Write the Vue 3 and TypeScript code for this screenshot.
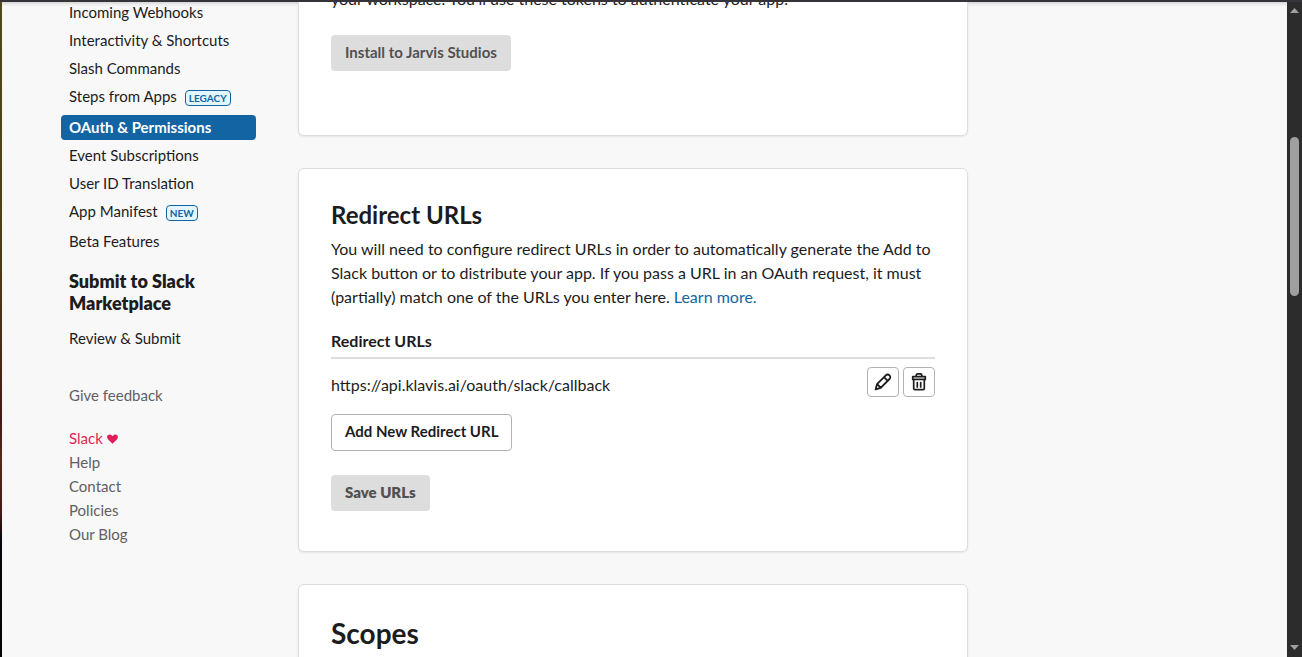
<script setup lang="ts">
interface NavItem {
  label: string
  badge?: string
  active?: boolean
}

const navItems: NavItem[] = [
  { label: 'Incoming Webhooks' },
  { label: 'Interactivity & Shortcuts' },
  { label: 'Slash Commands' },
  { label: 'Steps from Apps', badge: 'LEGACY' },
  { label: 'OAuth & Permissions', active: true },
  { label: 'Event Subscriptions' },
  { label: 'User ID Translation' },
  { label: 'App Manifest', badge: 'NEW' },
  { label: 'Beta Features' },
]

const footerLinks: string[] = ['Help', 'Contact', 'Policies', 'Our Blog']
const redirectUrls: string[] = ['https://api.klavis.ai/oauth/slack/callback']
</script>

<template>
  <div class="window">
    <div class="edge"></div>
    <div class="viewport">
      <div class="page">
        <aside class="sidebar">
          <nav aria-label="App settings">
            <ul class="nav">
              <li v-for="item in navItems" :key="item.label">
                <a href="#" class="nav-link" :class="{ active: item.active, tall: item.badge }">
                  {{ item.label }}<span v-if="item.badge" class="badge">{{ item.badge }}</span>
                </a>
              </li>
            </ul>
            <h3 class="nav-heading">Submit to Slack Marketplace</h3>
            <ul class="nav">
              <li><a href="#" class="nav-link">Review &amp; Submit</a></li>
            </ul>
          </nav>
          <div class="side-footer">
            <a href="#" class="feedback">Give feedback</a>
            <a href="#" class="slack">
              Slack
              <svg width="11" height="10" viewBox="0 0 12 11" aria-hidden="true">
                <path d="M6 10.6 1.2 6.1C-.2 4.7-.3 2.6.8 1.4c1.2-1.3 3.4-1.2 4.5.2L6 2.5l.7-.9c1.1-1.4 3.3-1.5 4.5-.2 1.1 1.2 1 3.3-.4 4.7z" fill="currentColor" />
              </svg>
            </a>
            <a v-for="link in footerLinks" :key="link" href="#">{{ link }}</a>
          </div>
        </aside>

        <main class="content">
          <section class="card tokens">
            <p class="text">your workspace. You’ll use these tokens to authenticate your app.</p>
            <button type="button" class="btn disabled" disabled>Install to Jarvis Studios</button>
          </section>

          <section class="card">
            <h2 class="title">Redirect URLs</h2>
            <p class="text">
              You will need to configure redirect URLs in order to automatically generate the Add to
              Slack button or to distribute your app. If you pass a URL in an OAuth request, it must
              (partially) match one of the URLs you enter here. <a href="#" class="more">Learn more.</a>
            </p>
            <table class="urls">
              <thead>
                <tr><th colspan="2" scope="col">Redirect URLs</th></tr>
              </thead>
              <tbody>
                <tr v-for="url in redirectUrls" :key="url">
                  <td class="url">{{ url }}</td>
                  <td class="actions">
                    <div class="action-row">
                      <button type="button" class="icon-btn" aria-label="Edit">
                        <svg width="20" height="20" viewBox="0 0 20 20" fill="none" stroke="currentColor" stroke-width="1.8" stroke-linejoin="round" stroke-linecap="round" aria-hidden="true">
                          <path d="M2.6 17.4 4 12.2 12.8 3.3a2.5 2.5 0 0 1 3.7 0 2.6 2.6 0 0 1 0 3.7L7.7 15.9zM4.2 12.2l3.5 3.5M11 5.2l3.7 3.7" />
                        </svg>
                      </button>
                      <button type="button" class="icon-btn" aria-label="Delete">
                        <svg width="20" height="20" viewBox="0 0 20 20" fill="none" stroke="currentColor" stroke-width="1.7" stroke-linejoin="round" stroke-linecap="round" aria-hidden="true">
                          <path d="M7.2 4.5V3.2c0-.8.5-1.3 1.3-1.3h3c.8 0 1.3.5 1.3 1.3v1.3M3.7 4.7h12.6v2.7H3.7zM4.7 7.5v9c0 .7.5 1.2 1.2 1.2h8.2c.7 0 1.2-.5 1.2-1.2v-9M8.3 10.5v4.5M11.7 10.5v4.5" />
                        </svg>
                      </button>
                    </div>
                  </td>
                </tr>
              </tbody>
            </table>
            <div class="stack">
              <button type="button" class="btn outline">Add New Redirect URL</button>
              <button type="button" class="btn disabled heavy" disabled>Save URLs</button>
            </div>
          </section>

          <section class="card">
            <h1 class="scopes">Scopes</h1>
          </section>
        </main>
      </div>
    </div>
    <div class="scrollbar" aria-hidden="true">
      <svg width="9" height="5" viewBox="0 0 9 5"><path d="M0 5 4.5 0 9 5z" fill="#9f9f9f" /></svg>
      <div class="track"><div class="thumb"></div></div>
      <svg width="9" height="5" viewBox="0 0 9 5"><path d="M0 0h9L4.5 5z" fill="#9f9f9f" /></svg>
    </div>
  </div>
</template>

<style>
body {
  margin: 0;
  background: #f8f8f8;
}
</style>

<style scoped>
.window {
  display: flex;
  box-sizing: border-box;
  height: 100vh;
  overflow: hidden;
  border-top: 2px solid #363439;
  background: #f8f8f8;
  color: #1d1c1d;
  font-family: Lato, sans-serif;
  font-size: 16px;
  line-height: 24px;
}

.edge {
  flex: none;
  width: 2px;
  background: linear-gradient(#504a1c, #4c3f16 35%, #4a2c18 52%, #421a18 64%, #55291a 70%, #421a18 78%, #08080c 82%, #050507);
}

.viewport {
  flex: 1;
  min-width: 0;
  overflow: hidden;
  box-shadow: inset 0 4px 4px -3px rgba(0, 0, 0, 0.2);
}

.page {
  display: flex;
  gap: 42px;
  margin-top: -2px;
  padding: 0 32px 0 59px;
}

.sidebar {
  flex: none;
  width: 195px;
  font-size: 15px;
}

.nav {
  display: flex;
  flex-direction: column;
  gap: 3px;
  margin: 0;
  padding: 0;
  list-style: none;
}

.nav-link {
  display: block;
  height: 25px;
  padding: 0 8px;
  border-radius: 4px;
  line-height: 25px;
  color: inherit;
  text-decoration: none;
}

.nav-link.tall {
  height: 27px;
}

.nav-link.active {
  margin-top: 1px;
  background: #1264a3;
  color: #fff;
  font-weight: 700;
}

.badge {
  display: inline-block;
  margin-left: 8px;
  padding: 0 3px;
  border: 1px solid #1264a3;
  border-radius: 4px;
  background: #e3f6fd;
  color: #1264a3;
  font-size: 10px;
  font-weight: 700;
  line-height: 14px;
}

.nav-heading {
  margin: 16px 0 12px;
  padding: 0 8px;
  font-size: 18px;
  font-weight: 800;
  line-height: 22px;
}

.side-footer {
  display: flex;
  flex-direction: column;
  margin-top: 32px;
  padding-left: 8px;
}

.side-footer a {
  color: #616061;
  text-decoration: none;
}

.side-footer .feedback {
  margin-bottom: 19px;
}

.side-footer .slack {
  color: #e01e5a;
}

.content {
  display: flex;
  flex: 0 1 670px;
  flex-direction: column;
  gap: 32px;
  min-width: 0;
}

.card {
  box-sizing: border-box;
  padding: 32px 32px 40px;
  border: 1px solid #dddddd;
  border-radius: 6px;
  background: #fff;
  box-shadow: 0 1px 2px rgba(0, 0, 0, 0.08);
}

.card.tokens {
  margin-top: -46px;
  padding-bottom: 64px;
}

.tokens .text {
  margin-bottom: 24px;
}

.text {
  margin: 0;
}

.title {
  margin: 0 0 8px;
  font-size: 24px;
  font-weight: 700;
  line-height: 28px;
}

.more {
  color: #1264a3;
  text-decoration: none;
}

.urls {
  width: 100%;
  margin-top: 20px;
  border-collapse: collapse;
}

.urls th {
  padding: 0 0 4px;
  border-bottom: 2px solid #dddddd;
  font-size: 16px;
  font-weight: 700;
  text-align: left;
}

.urls td {
  padding: 8px 0 0;
  vertical-align: top;
}

.urls .url {
  padding-top: 14px;
}

.action-row {
  display: flex;
  justify-content: flex-end;
  gap: 4px;
}

.icon-btn {
  display: flex;
  align-items: center;
  justify-content: center;
  box-sizing: border-box;
  width: 32px;
  height: 30px;
  padding: 0;
  border: 1px solid #b3b3b3;
  border-radius: 4px;
  background: #fff;
  color: #1d1c1d;
}

.stack {
  display: flex;
  flex-direction: column;
  align-items: flex-start;
  gap: 24px;
  margin-top: 17px;
}

.btn {
  box-sizing: border-box;
  height: 36px;
  padding: 0 14px 2px;
  border: 0;
  border-radius: 4px;
  font-family: inherit;
  font-size: 15px;
  font-weight: 700;
}

.btn.disabled {
  background: #dddddd;
  color: #525152;
}

.btn.heavy {
  font-weight: 800;
}

.btn.outline {
  height: 37px;
  padding: 0 13px 3px;
  border: 1px solid #b3b3b3;
  background: #fff;
  color: #1d1c1d;
}

.scopes {
  margin: 0;
  font-size: 28px;
  font-weight: 700;
  line-height: 32px;
}

.scrollbar {
  display: flex;
  flex: none;
  flex-direction: column;
  align-items: center;
  gap: 6px;
  box-sizing: border-box;
  width: 15px;
  padding: 6px 0 7px;
  background: #2c2c2c;
}

.track {
  display: flex;
  flex: 1;
  flex-direction: column;
}

.track::before {
  flex: 118;
  content: "";
}

.track::after {
  flex: 343;
  content: "";
}

.thumb {
  flex: 159;
  width: 9px;
  border-radius: 5px;
  background: #9f9f9f;
}
</style>
